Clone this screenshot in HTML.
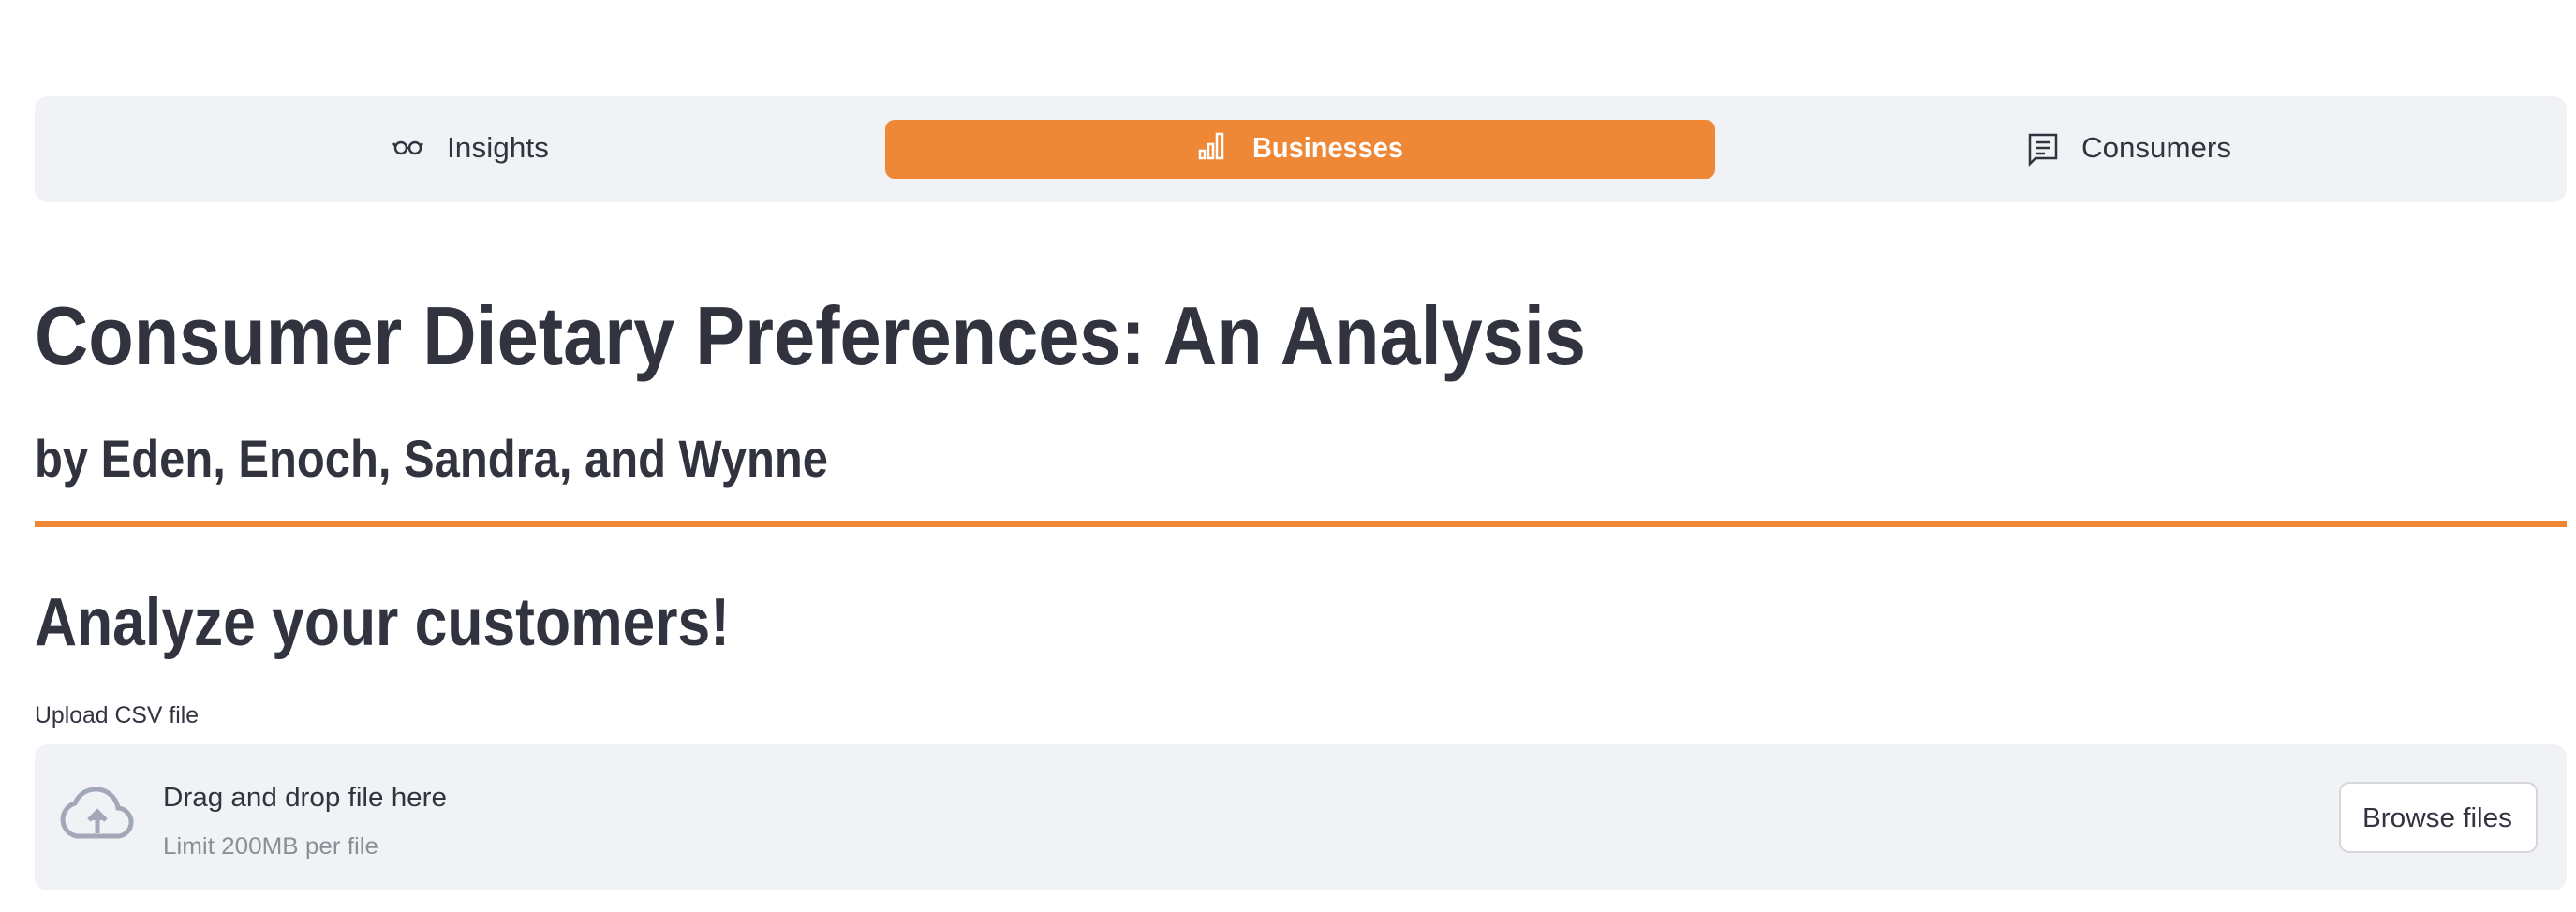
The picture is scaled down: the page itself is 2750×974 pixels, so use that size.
<!DOCTYPE html>
<html><head><meta charset="utf-8"><style>
html,body{margin:0;padding:0;background:#fff;width:2750px;height:974px;overflow:hidden}
svg{display:block}
text{font-family:"Liberation Sans",sans-serif;fill:#31333f}
</style></head><body>
<svg width="2750" height="974" viewBox="0 0 2750 974" xmlns="http://www.w3.org/2000/svg">
<rect x="37" y="103" width="2703" height="113" rx="14" fill="#f0f2f6"/>
<rect x="945" y="128" width="886" height="63" rx="10" fill="#ef8836"/>
<g fill="none" stroke="#31333f" stroke-width="2.5">
<circle cx="428" cy="158" r="6"/><circle cx="443" cy="158" r="6"/><path d="M434 158h3M422 156l-2-3M449 156l2-3"/>
</g>
<text x="477" y="168" font-size="31" textLength="109" lengthAdjust="spacingAndGlyphs">Insights</text>
<g fill="none" stroke="#fff" stroke-width="2.5">
<rect x="1281" y="161" width="5" height="8"/><rect x="1290" y="154" width="5" height="15"/><rect x="1299" y="143" width="6" height="26"/>
</g>
<text x="1337" y="168" font-size="31" font-weight="bold" style="fill:#fff" textLength="161" lengthAdjust="spacingAndGlyphs">Businesses</text>
<g fill="none" stroke="#31333f" stroke-width="2.5">
<path d="M2167 144h28v25h-22l-6 6z"/><path d="M2173 152h16M2173 158h16M2173 164h10"/>
</g>
<text x="2222" y="168" font-size="31" textLength="160" lengthAdjust="spacingAndGlyphs">Consumers</text>
<text x="37" y="389" font-size="88" font-weight="bold" textLength="1656" lengthAdjust="spacingAndGlyphs">Consumer Dietary Preferences: An Analysis</text>
<text x="37" y="509" font-size="56" font-weight="bold" textLength="847" lengthAdjust="spacingAndGlyphs">by Eden, Enoch, Sandra, and Wynne</text>
<rect x="37" y="556" width="2703" height="7" fill="#ef8836"/>
<text x="37" y="689" font-size="72" font-weight="bold" textLength="742" lengthAdjust="spacingAndGlyphs">Analyze your customers!</text>
<text x="37" y="772" font-size="25" textLength="175" lengthAdjust="spacingAndGlyphs">Upload CSV file</text>
<rect x="37" y="795" width="2703" height="156" rx="14" fill="#f0f2f6"/>
<path d="M82 893h42a15 15 0 0 0 2-30a24 24 0 0 0-46-5a18 18 0 0 0 2 35z" fill="none" stroke="#a3a8b8" stroke-width="5"/>
<path d="M104 890v-22M95 876l9-9 9 9" fill="#a3a8b8" stroke="#a3a8b8" stroke-width="5"/>
<text x="174" y="861" font-size="29" textLength="303" lengthAdjust="spacingAndGlyphs">Drag and drop file here</text>
<text x="174" y="912" font-size="25" style="fill:#8c8e96" textLength="230" lengthAdjust="spacingAndGlyphs">Limit 200MB per file</text>
<rect x="2498" y="836" width="210" height="74" rx="10" fill="#fff" stroke="#d6d7db" stroke-width="2"/>
<text x="2522" y="883" font-size="29" textLength="160" lengthAdjust="spacingAndGlyphs">Browse files</text>
</svg>
</body></html>
